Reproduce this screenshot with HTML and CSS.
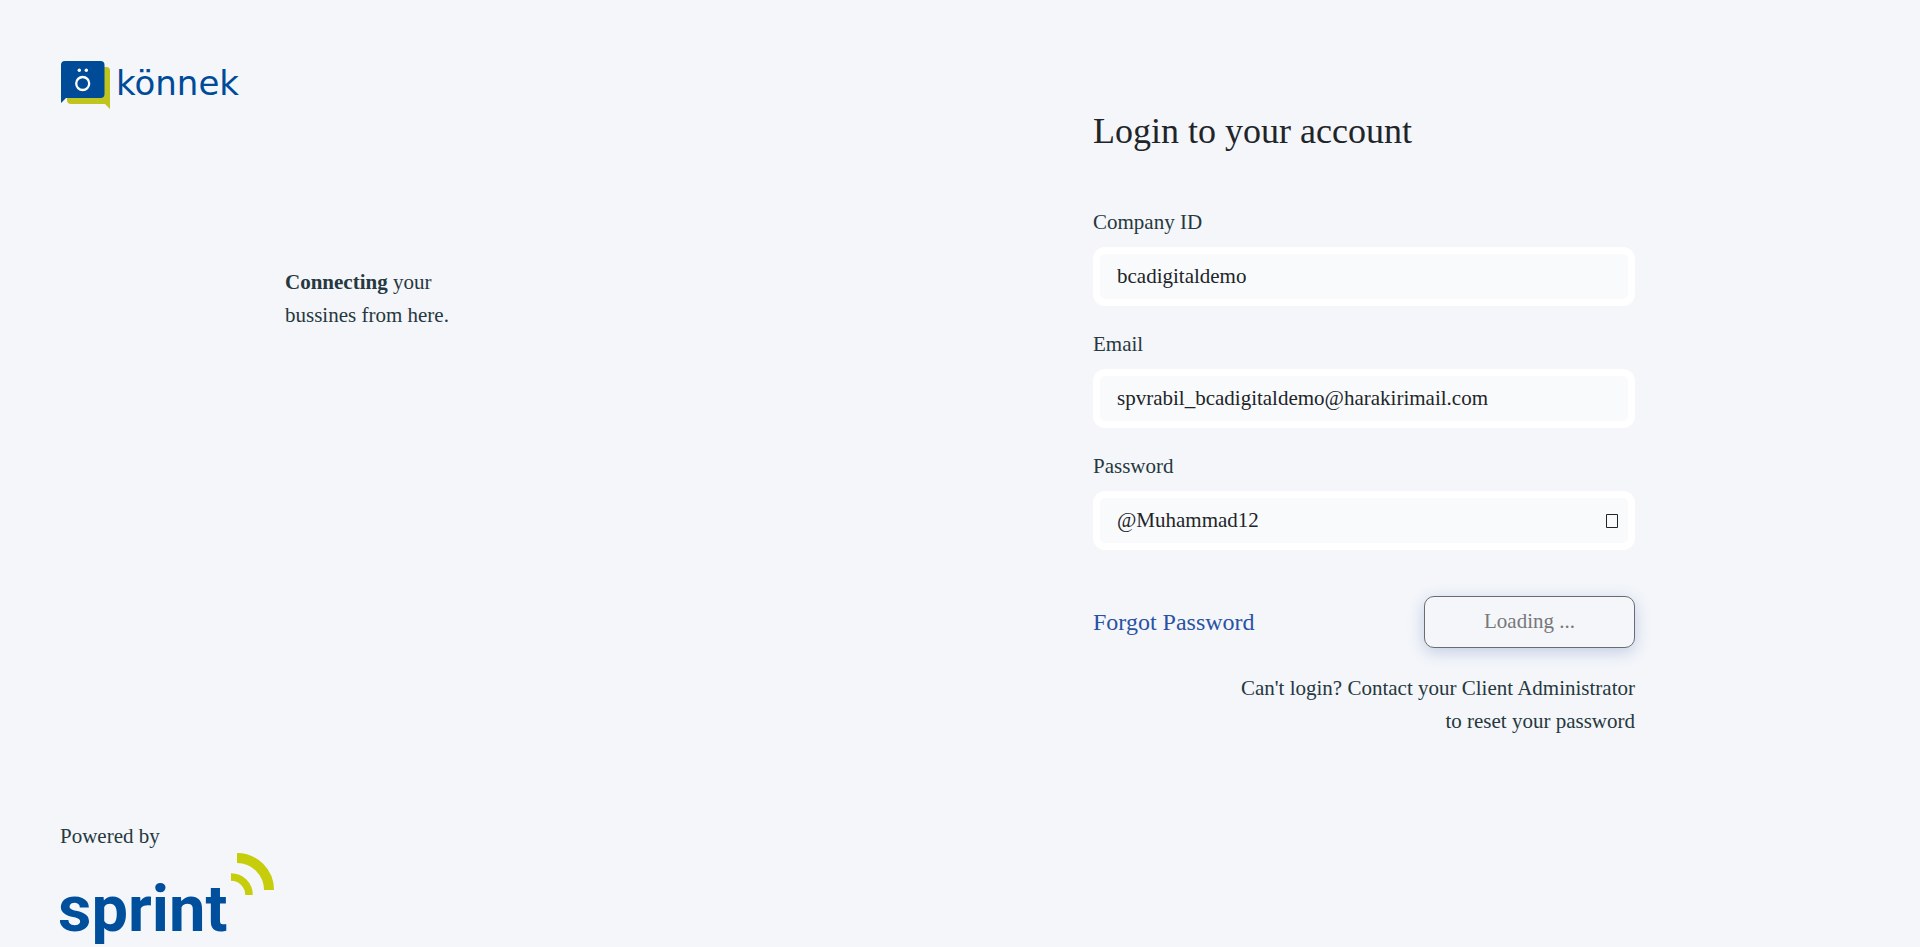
FILE: index.html
```html
<!DOCTYPE html>
<html lang="en">
<head>
<meta charset="utf-8">
<title>Login</title>
<meta name="viewport" content="width=device-width, initial-scale=1">
<link rel="stylesheet" href="styles.css">
</head>
<body>
<div class="page">
  <aside class="brand">
    <svg class="brand-logo" width="184" height="52" viewBox="0 0 184 52" role="img" aria-label="könnek">
      <path fill="#bfc51e" d="M7 7h39.500q3.500 0 3.500 3.500V49l-5-5H11q-4 0-4-4z"/>
      <path fill="#004b98" d="M5 1h35.500q4 0 4 4v29q0 4-4 4H6l-5 5V5q0-4 4-4z"/>
      <circle cx="22.700" cy="23.500" r="6.500" fill="none" stroke="#fff" stroke-width="2.300"/>
      <circle cx="19.300" cy="10.300" r="1.700" fill="#fff"/>
      <circle cx="26.300" cy="10.300" r="1.700" fill="#fff"/>
      <text class="wordmark" x="56" y="35">könnek</text>
    </svg>
    <p class="tagline"><strong>Connecting</strong> your<br>bussines from here.</p>
    <div class="powered">
      <p class="powered-label">Powered by</p>
      <svg class="sprint-logo" width="216" height="94" viewBox="0 0 216 94" role="img" aria-label="sprint">
        <text class="sprint-word" x="-2" y="78">sprint</text>
        <path fill="none" stroke="#c6cd0a" stroke-width="10" d="M177 5a32 32 0 0 1 32 32"/>
        <path fill="none" stroke="#c6cd0a" stroke-width="7.500" d="M171 24a18 18 0 0 1 18 18"/>
      </svg>
    </div>
  </aside>
  <main class="login">
    <form class="form">
      <h1 class="title">Login to your account</h1>
      <div class="field">
        <label for="company">Company ID</label>
        <input class="control" id="company" type="text" value="bcadigitaldemo">
      </div>
      <div class="field">
        <label for="email">Email</label>
        <input class="control" id="email" type="email" value="spvrabil_bcadigitaldemo@harakirimail.com">
      </div>
      <div class="field">
        <label for="password">Password</label>
        <div class="password">
          <input class="control" id="password" type="text" value="@Muhammad12">
          <button class="toggle" type="button" aria-label="Toggle password visibility">
            <svg width="12" height="14" viewBox="0 0 12 14"><path fill="none" stroke="#212529" d="M.5.500h11v13H.500z"/></svg>
          </button>
        </div>
      </div>
      <div class="actions">
        <a class="forgot" href="#">Forgot Password</a>
        <button class="submit" type="submit" disabled>Loading ...</button>
      </div>
      <p class="help">Can't login? Contact your Client Administrator<br>to reset your password</p>
    </form>
  </main>
</div>
</body>
</html>
```

FILE: styles.css
```css
* {
  box-sizing: border-box;
}

body {
  margin: 0;
  background: #f4f6fa;
  color: #263840;
  font-family: "Liberation Serif", "Times New Roman", serif;
  font-size: 21px;
  line-height: 33px;
}

p,
h1 {
  margin: 0;
}

.page {
  display: grid;
  grid-template-columns: 1fr 1fr;
  min-height: 100vh;
}

.brand {
  display: flex;
  flex-direction: column;
  padding: 60px 60px 0;
}

.brand-logo,
.sprint-logo {
  display: block;
}

.wordmark {
  font-family: "DejaVu Sans", sans-serif;
  font-size: 34px;
  fill: #004b98;
}

.tagline {
  margin: 154px 0 0 225px;
}

.powered {
  margin-top: auto;
}

.sprint-word {
  font-family: Roboto, "Liberation Sans", sans-serif;
  font-size: 65px;
  font-weight: 700;
  line-height: 1;
  fill: #004f9c;
}

.login {
  padding: 109px 60px 60px 133px;
}

.form {
  max-width: 542px;
}

.title {
  margin-bottom: 53px;
  color: #212529;
  font-size: 36px;
  font-weight: 400;
  line-height: 44px;
}

.field {
  display: flex;
  flex-direction: column;
  gap: 8px;
  margin-bottom: 22px;
}

.control {
  width: 100%;
  height: 59px;
  padding: 0 17px;
  border: 7px solid #fff;
  border-radius: 12px;
  background: #f9fafc;
  color: #212529;
  font: inherit;
}

.password {
  position: relative;
  display: flex;
}

.toggle {
  position: absolute;
  top: 0;
  right: 7px;
  bottom: 0;
  display: flex;
  align-items: center;
  padding: 0 10px;
  border: 0;
  background: none;
}

.actions {
  display: flex;
  align-items: center;
  justify-content: space-between;
  margin-top: 46px;
}

.forgot {
  color: #2a52a3;
  font-size: 24px;
  text-decoration: none;
}

.submit {
  width: 211px;
  height: 52px;
  padding-bottom: 3px;
  border: 1px solid #6b6c70;
  border-radius: 10px;
  background: #f4f6fa;
  box-shadow: 0 4px 16px rgba(42, 82, 163, 0.25);
  color: #77787b;
  font: inherit;
}

.help {
  margin-top: 24px;
  text-align: right;
}
```
